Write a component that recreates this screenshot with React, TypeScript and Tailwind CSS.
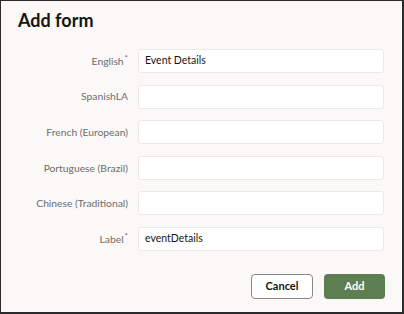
import React from "react";

const rows: { label: string; required?: boolean; value: string }[] = [
  { label: "English", required: true, value: "Event Details" },
  { label: "SpanishLA", value: "" },
  { label: "French (European)", value: "" },
  { label: "Portuguese (Brazil)", value: "" },
  { label: "Chinese (Traditional)", value: "" },
  { label: "Label", required: true, value: "eventDetails" },
];

export default function App() {
  return (
    <div
      className="w-[404px] h-[314px] bg-[#faf9f8] border-l border-t border-r-2 border-b-2 border-[#2b2b2b] flex flex-col"
      style={{ fontFamily: 'Lato, "Noto Sans", sans-serif' }}
    >
      <div className="pl-[17px] pt-[6px] h-[48px]">
        <h1 className="text-[18px] font-bold text-[#161513] leading-[26px]">Add form</h1>
      </div>
      <div className="flex flex-col gap-[11.6px]">
        {rows.map((r) => (
          <div key={r.label} className="flex items-center h-[24px]">
            <div className="w-[127px] text-right text-[10.3px] text-[#6f6c69] leading-none">
              {r.label}
              {r.required && (
                <span className="relative -top-[4px] ml-[1px] text-[8px] text-[#6f6c69]">*</span>
              )}
            </div>
            <div className="ml-[10px] w-[246px] h-[24px] bg-white border border-[#ece9e6] rounded-[3px] flex items-center px-[6px] text-[10.5px] text-[#161513]">
              {r.value}
            </div>
          </div>
        ))}
      </div>
      <div className="flex justify-end gap-[11px] pr-[17px] mt-[23px]">
        <button className="w-[62px] h-[25px] rounded-[4px] border border-[#8c8985] bg-white text-[11px] font-bold text-[#161513]">
          Cancel
        </button>
        <button className="w-[61px] h-[25px] rounded-[4px] bg-[#5d7e50] text-[11px] font-bold text-white">
          Add
        </button>
      </div>
    </div>
  );
}
